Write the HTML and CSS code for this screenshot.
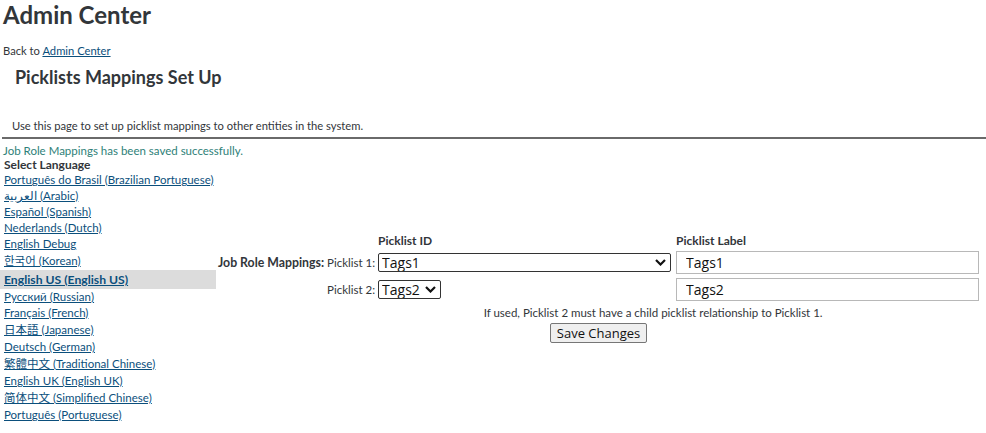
FILE: index.html
```html
<!DOCTYPE html>
<html lang="en">
  <head>
    <meta charset="UTF-8" />
    <meta name="viewport" content="width=device-width, initial-scale=1.0" />
    <link rel="stylesheet" href="styles.css">
  </head>
  <body>
    <h1 class="page-title">Admin Center</h1>
    <p class="back">Back to <a href="#">Admin Center</a></p>
    <h2 class="section-title">Picklists Mappings Set Up</h2>
    <p class="intro">Use this page to set up picklist mappings to other entities in the system.</p>
    <hr class="divider" />
    <p class="success">Job Role Mappings has been saved successfully.</p>

    <div class="main">
      <div class="languages">
        <div class="lang-title">Select Language</div>
        <a class="lang" href="#">Português do Brasil (Brazilian Portuguese)</a>
        <a class="lang" href="#">العربية (Arabic)</a>
        <a class="lang" href="#">Español (Spanish)</a>
        <a class="lang" href="#">Nederlands (Dutch)</a>
        <a class="lang" href="#">English Debug</a>
        <a class="lang tall" href="#">한국어 (Korean)</a>
        <a class="lang current" href="#">English US (English US)</a>
        <a class="lang" href="#">Русский (Russian)</a>
        <a class="lang" href="#">Français (French)</a>
        <a class="lang tall" href="#">日本語 (Japanese)</a>
        <a class="lang" href="#">Deutsch (German)</a>
        <a class="lang tall" href="#">繁體中文 (Traditional Chinese)</a>
        <a class="lang" href="#">English UK (English UK)</a>
        <a class="lang tall" href="#">简体中文 (Simplified Chinese)</a>
        <a class="lang" href="#">Português (Portuguese)</a>
      </div>

      <table class="mapping">
        <tr class="head">
          <th></th>
          <th></th>
          <th>Picklist ID</th>
          <th class="col-label">Picklist Label</th>
        </tr>
        <tr>
          <td class="group">Job Role Mappings:</td>
          <td class="which">Picklist 1:</td>
          <td>
            <span class="select-wrap">
              <select class="pick wide">
                <option>Tags1</option>
              </select>
              <svg class="chevron" width="11" height="7" viewBox="0 0 11 7"><polyline points="1,1 5.5,5.5 10,1" fill="none" stroke="#111" stroke-width="2.2" /></svg>
            </span>
          </td>
          <td><input class="label-input" type="text" value="Tags1" /></td>
        </tr>
        <tr>
          <td></td>
          <td class="which">Picklist 2:</td>
          <td>
            <span class="select-wrap">
              <select class="pick">
                <option>Tags2</option>
              </select>
              <svg class="chevron" width="11" height="7" viewBox="0 0 11 7"><polyline points="1,1 5.5,5.5 10,1" fill="none" stroke="#111" stroke-width="2.2" /></svg>
            </span>
          </td>
          <td><input class="label-input" type="text" value="Tags2" /></td>
        </tr>
        <tr>
          <td></td>
          <td colspan="3" class="note">If used, Picklist 2 must have a child picklist relationship to Picklist 1.</td>
        </tr>
        <tr>
          <td colspan="4" class="actions"><button class="save" type="button">Save Changes</button></td>
        </tr>
      </table>
    </div>
  </body>
</html>
```

FILE: styles.css
```css
body {
  margin: 0;
  padding: 0 0 0 3px;
  font-family: Lato, "Noto Sans CJK JP", sans-serif;
  font-size: 11.5px;
  color: #32363a;
}
a {
  color: #0b4f7c;
}
.page-title {
  margin: 0;
  font-size: 24px;
  line-height: 30px;
  font-weight: bold;
}
.back {
  margin: 13px 0 0;
  font-size: 11.2px;
  line-height: 15px;
}
.section-title {
  margin: 8px 0 0 12px;
  font-size: 18px;
  line-height: 22px;
  font-weight: bold;
}
.intro {
  margin: 30px 0 0 9px;
  font-size: 11.2px;
  line-height: 15px;
}
.divider {
  margin: 4px 0 0 -1px;
  border: 0;
  border-top: 2px solid #6a6a6a;
  height: 0;
}
.success {
  margin: 5px 0 0;
  line-height: 14px;
  color: #2e7f78;
}
.main {
  display: flex;
  align-items: center;
}
.languages {
  display: flex;
  flex-direction: column;
  width: 216px;
  margin-left: -3px;
  white-space: nowrap;
}
.lang-title {
  padding-left: 4px;
  font-size: 12px;
  line-height: 14px;
  font-weight: bold;
}
.lang {
  padding-left: 4px;
  line-height: 16px;
}
.lang.tall {
  line-height: 18px;
}
.lang.current {
  background: #dcdcdc;
  font-size: 12.2px;
  font-weight: bold;
  line-height: 19px;
}
.mapping {
  border-collapse: collapse;
  margin-left: 2px;
  margin-bottom: 5px;
}
.mapping td,
.mapping th {
  padding: 0;
}
.mapping .head th {
  text-align: left;
  font-size: 12px;
  font-weight: bold;
  line-height: 14px;
  padding-bottom: 1px;
}
.mapping .col-label {
  padding-left: 5px;
}
.mapping .group {
  font-size: 12.3px;
  font-weight: bold;
  padding-right: 3px;
  white-space: nowrap;
}
.mapping .which {
  text-align: right;
  padding-right: 3px;
  white-space: nowrap;
}
.select-wrap {
  position: relative;
  display: inline-block;
  vertical-align: middle;
}
.pick {
  -webkit-appearance: none;
  appearance: none;
  display: block;
  box-sizing: border-box;
  font-family: "Open Sans", sans-serif;
  font-size: 14px;
  line-height: 17px;
  height: 19px;
  padding: 0 20px 0 3px;
  border: 1px solid #333;
  border-radius: 2px;
  background: #fff;
  color: #111;
}
.pick.wide {
  width: 293px;
}
.chevron {
  position: absolute;
  right: 5px;
  top: 6px;
  pointer-events: none;
}
.label-input {
  display: block;
  box-sizing: border-box;
  width: 303px;
  height: 23px;
  margin: 2px 0 2px 5px;
  padding: 0 9px;
  border: 1px solid #b8b8b8;
  font-family: "Open Sans", sans-serif;
  font-size: 14px;
  color: #111;
}
.mapping .note {
  text-align: center;
  line-height: 14px;
  padding-top: 3px;
}
.mapping .actions {
  text-align: center;
  padding-top: 3px;
}
.save {
  font-family: "Open Sans", sans-serif;
  font-size: 13px;
  line-height: 16px;
  padding: 1px 6px;
  border: 1px solid #767676;
  border-radius: 2px;
  background: #efefef;
  color: #111;
}
```
